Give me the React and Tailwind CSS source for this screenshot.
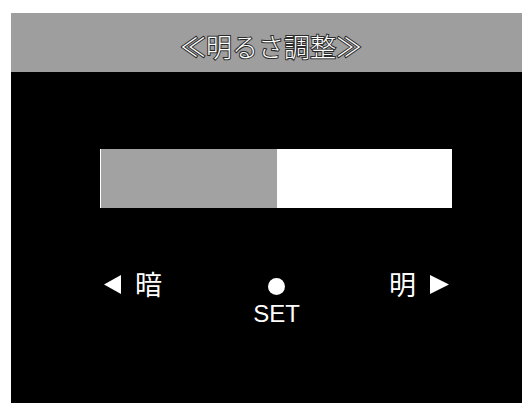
export default function App() {
  return (
    <div className="w-[531px] h-[403px] bg-white overflow-hidden">
      <div className="ml-[11px] mt-[13px] w-[511px] h-[390px] bg-black flex flex-col">
        <div className="h-[59px] bg-[#9e9e9e] flex items-center justify-center pt-[6px] pl-[9px]">
          <span
            className="text-white text-[26px] leading-none font-light [font-family:'Noto_Sans_CJK_JP',sans-serif] [-webkit-text-stroke:2px_#2a2a2a] [paint-order:stroke_fill]"
          >
            ≪明るさ調整≫
          </span>
        </div>
        <div className="ml-[89px] mt-[77px] w-[352px] h-[59px] bg-white flex">
          <div className="ml-[1px] w-[176px] h-full bg-[#a2a2a2]" />
        </div>
        <div className="ml-[93px] mt-[62px] w-[345px] flex justify-between items-start text-white [font-family:'Noto_Sans_CJK_JP',sans-serif]">
          <div className="flex items-center gap-[14px] h-[26px]">
            <svg width="17" height="19" viewBox="0 0 17 19" className="mt-[2px]">
              <polygon points="17,0 0,9.5 17,19" fill="white" />
            </svg>
            <span className="text-[27px] leading-none font-normal">暗</span>
          </div>
          <div className="flex flex-col items-center pl-[2px]">
            <div className="mt-[8px] w-[17px] h-[17px] rounded-full bg-white" />
            <span className="mt-[7px] text-[24px] leading-none [font-family:'Liberation_Sans',sans-serif]">SET</span>
          </div>
          <div className="flex items-center gap-[14px] h-[26px]">
            <span className="text-[27px] leading-none font-normal">明</span>
            <svg width="19" height="19" viewBox="0 0 19 19" className="mt-[2px]">
              <polygon points="0,0 19,9.5 0,19" fill="white" />
            </svg>
          </div>
        </div>
      </div>
    </div>
  );
}
